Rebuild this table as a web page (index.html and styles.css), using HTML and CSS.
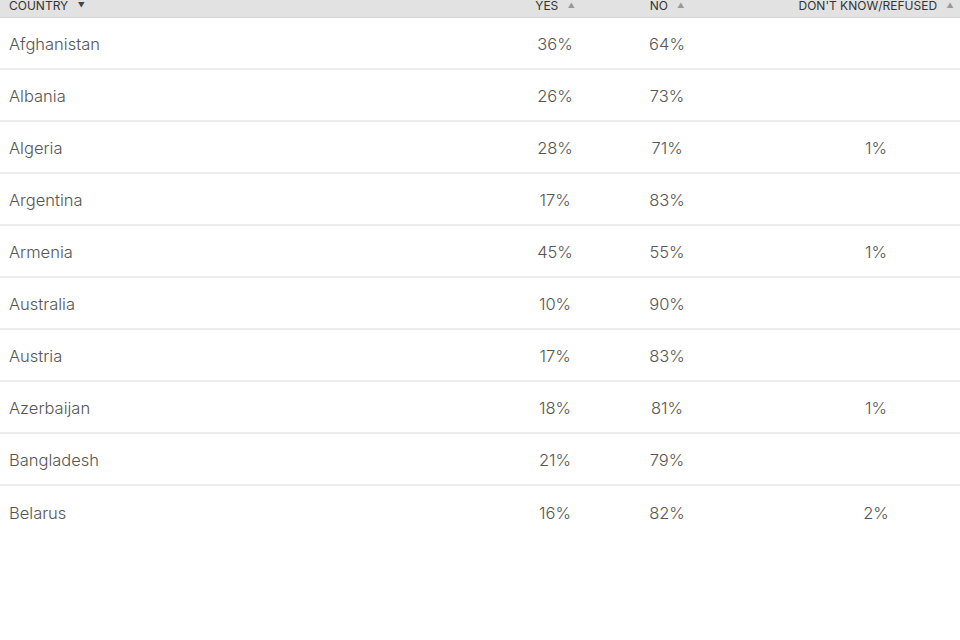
FILE: index.html
```html
<!DOCTYPE html>
<html>
<head>
<meta charset="utf-8">
<link rel="stylesheet" href="styles.css">
</head>
<body>
<div class="table">
  <div class="row head">
    <div class="cell c1">COUNTRY <span class="caret down">&#9660;</span></div>
    <div class="cell c2">YES <span class="caret">&#9650;</span></div>
    <div class="cell c3">NO <span class="caret">&#9650;</span></div>
    <div class="cell c4">DON'T KNOW/REFUSED <span class="caret">&#9650;</span></div>
  </div>
  <div class="row"><div class="cell c1">Afghanistan</div><div class="cell c2">36%</div><div class="cell c3">64%</div><div class="cell c4"></div></div>
  <div class="row"><div class="cell c1">Albania</div><div class="cell c2">26%</div><div class="cell c3">73%</div><div class="cell c4"></div></div>
  <div class="row"><div class="cell c1">Algeria</div><div class="cell c2">28%</div><div class="cell c3">71%</div><div class="cell c4">1%</div></div>
  <div class="row"><div class="cell c1">Argentina</div><div class="cell c2">17%</div><div class="cell c3">83%</div><div class="cell c4"></div></div>
  <div class="row"><div class="cell c1">Armenia</div><div class="cell c2">45%</div><div class="cell c3">55%</div><div class="cell c4">1%</div></div>
  <div class="row"><div class="cell c1">Australia</div><div class="cell c2">10%</div><div class="cell c3">90%</div><div class="cell c4"></div></div>
  <div class="row"><div class="cell c1">Austria</div><div class="cell c2">17%</div><div class="cell c3">83%</div><div class="cell c4"></div></div>
  <div class="row"><div class="cell c1">Azerbaijan</div><div class="cell c2">18%</div><div class="cell c3">81%</div><div class="cell c4">1%</div></div>
  <div class="row"><div class="cell c1">Bangladesh</div><div class="cell c2">21%</div><div class="cell c3">79%</div><div class="cell c4"></div></div>
  <div class="row last"><div class="cell c1">Belarus</div><div class="cell c2">16%</div><div class="cell c3">82%</div><div class="cell c4">2%</div></div>
</div>
</body>
</html>
```
FILE: styles.css
```css
html, body {
  margin: 0;
  padding: 0;
  background: #fff;
}
body {
  font-family: Inter, "Noto Sans", sans-serif;
  color: #555;
  overflow: hidden;
}
.table {
  display: flex;
  flex-direction: column;
}
.row {
  display: grid;
  grid-template-columns: 490px 130px 94px 1fr;
  align-items: center;
  height: 52px;
  border-bottom: 2px solid #ededed;
  box-sizing: border-box;
  font-size: 16.5px;
  font-weight: 300;
  padding-top: 1px;
}
.row.last {
  border-bottom: none;
}
.row.head {
  height: 18px;
  background: #e2e2e2;
  border-bottom: 1px solid #d6d6d6;
  font-size: 12px;
  font-weight: 400;
  color: #333;
  align-items: end;
  padding-top: 0;
  padding-bottom: 5px;
  line-height: 12px;
}
.cell.c1 {
  padding-left: 9px;
}
.cell.c2, .cell.c3 {
  text-align: center;
}
.cell.c4 {
  text-align: center;
  padding-left: 78px;
}
.caret {
  font-size: 7px;
  color: #999;
  margin-left: 6px;
  vertical-align: 2px;
}
.caret.down {
  color: #444;
}
```
